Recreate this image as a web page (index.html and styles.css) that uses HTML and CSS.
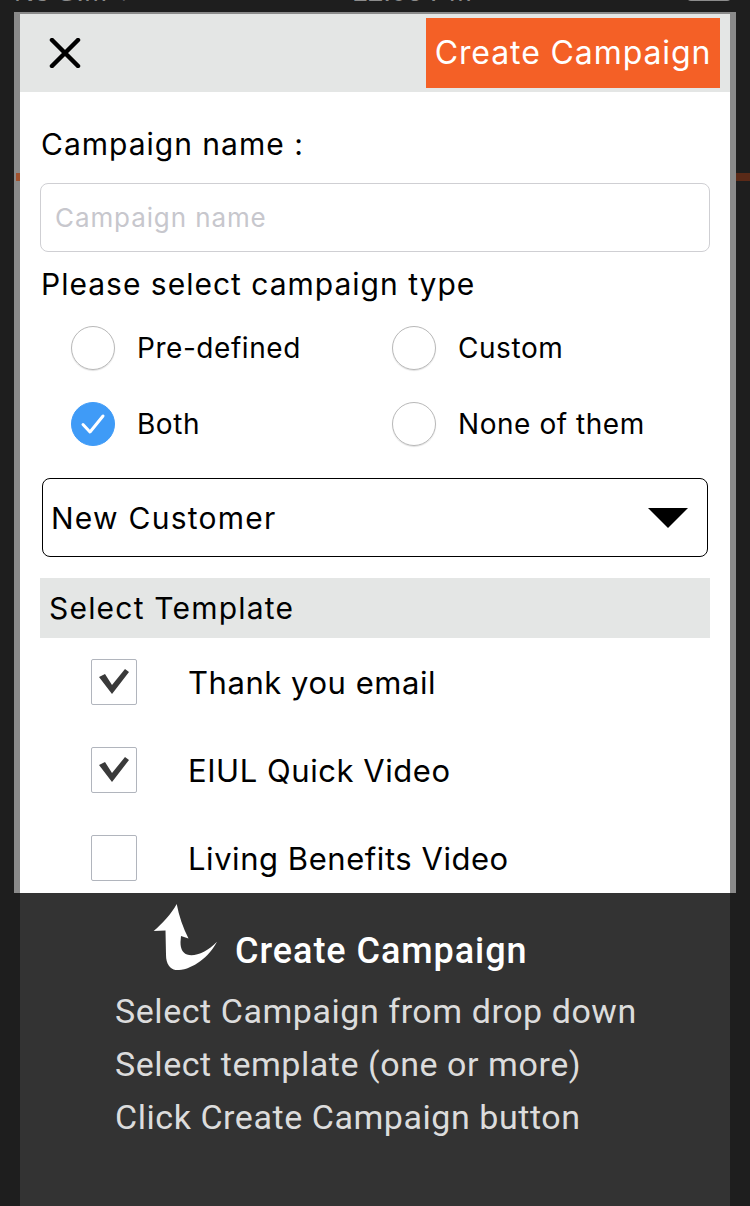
FILE: index.html
```html
<!DOCTYPE html>
<html>
<head>
<meta charset="utf-8">
<link rel="stylesheet" href="styles.css">
</head>
<body>
<div class="statusbar">
  <span class="sb-left">No SIM &#x2708;</span>
  <span class="sb-time">12:06 PM</span>
  <span class="sb-battery"></span>
</div>
<div class="modal">
  <span class="bleed bleed-left"></span>
  <span class="bleed bleed-right"></span>
  <div class="modal-head">
    <svg class="close-icon" width="32" height="30" viewBox="0 0 32 30">
      <path d="M3 2 L29 28 M29 2 L3 28" stroke="#000" stroke-width="4.5" stroke-linecap="round" fill="none"/>
    </svg>
    <div class="create-btn">Create Campaign</div>
  </div>
  <div class="modal-body">
    <div class="label first">Campaign name :</div>
    <div class="input"><span class="placeholder">Campaign name</span></div>
    <div class="label second">Please select campaign type</div>
    <div class="radios">
      <div class="radio"><span class="circle"></span><span class="rlabel">Pre-defined</span></div>
      <div class="radio"><span class="circle"></span><span class="rlabel">Custom</span></div>
      <div class="radio"><span class="circle checked"><svg width="44" height="44" viewBox="0 0 44 44"><path d="M12 22.5 L19 30 L32 14" stroke="#fff" stroke-width="3" fill="none" stroke-linecap="round" stroke-linejoin="round"/></svg></span><span class="rlabel">Both</span></div>
      <div class="radio"><span class="circle"></span><span class="rlabel">None of them</span></div>
    </div>
    <div class="select">
      <span class="select-text">New Customer</span>
      <svg class="caret" width="40" height="20" viewBox="0 0 40 20"><path d="M0 0 H40 L20 20 Z" fill="#000"/></svg>
    </div>
    <div class="section-bar">Select Template</div>
    <div class="templates">
      <div class="trow"><span class="box"><svg width="46" height="46" viewBox="0 0 46 46"><path d="M8 18 L14 15 L21 26 L34 10 L38 13 L21 35 Z" fill="#3a3a3a"/></svg></span><span class="tlabel">Thank you email</span></div>
      <div class="trow"><span class="box"><svg width="46" height="46" viewBox="0 0 46 46"><path d="M8 18 L14 15 L21 26 L34 10 L38 13 L21 35 Z" fill="#3a3a3a"/></svg></span><span class="tlabel">EIUL Quick Video</span></div>
      <div class="trow"><span class="box"></span><span class="tlabel">Living Benefits Video</span></div>
    </div>
  </div>
</div>
<div class="tour">
  <div class="tour-head">
    <svg class="tour-arrow" width="64" height="66" viewBox="22 13 64 66">
      <path d="M45.7 13 C41 22 31 33 22.7 40 L34.5 39.5 L35 64 C35 75 41 80 48 79 C62 78 78 66 86 50.7 C76 61 64 66 56 63.5 C51 61.5 49.5 57 49.5 51 L50 45 L57.5 47.5 C52 37 48 25 45.7 13 Z" fill="#fff"/>
    </svg>
    <div class="tour-title">Create Campaign</div>
  </div>
  <div class="tour-lines">
    <div>Select Campaign from drop down</div>
    <div>Select template (one or more)</div>
    <div>Click Create Campaign button</div>
  </div>
</div>
</body>
</html>
```

FILE: styles.css
```css
html, body {
  margin: 0;
  padding: 0;
  background: #1e1e1e;
  height: 1206px;
  overflow: hidden;
}

.statusbar {
  height: 12px;
  overflow: hidden;
  display: flex;
  justify-content: space-between;
  align-items: flex-start;
  padding: 0 18px 0 14px;
  font-family: "Liberation Sans", Arial, sans-serif;
  font-size: 28px;
  color: #8c8c8c;
}
.statusbar span {
  display: block;
  line-height: 30px;
  margin-top: -23px;
}
.sb-battery {
  width: 46px;
  height: 24px;
  border: 2px solid #8c8c8c;
  border-radius: 5px;
  box-sizing: border-box;
}

.modal {
  position: relative;
  margin: 0 14px;
  border: 6px solid #8a8a8a;
  border-top-width: 2px;
  border-bottom: 0;
  font-family: "Inter", "Liberation Sans", sans-serif;
  color: #000;
}
.bleed {
  position: absolute;
  top: 159px;
  height: 8px;
  background: #a0512e;
}
.bleed-left { left: -4px; width: 4px; }
.bleed-right { right: -20px; width: 14px; background: #5a2a18; }

.modal-head {
  height: 78px;
  background: #e4e6e5;
  display: flex;
  align-items: center;
  justify-content: space-between;
  padding: 0 10px 0 29px;
}
.close-icon { display: block; }
.create-btn {
  width: 294px;
  height: 70px;
  background: #f46026;
  color: #fff;
  font-size: 32px;
  line-height: 70px;
  text-align: center;
  letter-spacing: 0.9px;
}

.modal-body {
  background: #fff;
  height: 801px;
  overflow: hidden;
  padding: 0 20px;
}
.label {
  font-size: 30px;
  line-height: 40px;
  padding-left: 1px;
  letter-spacing: 1px;
}
.label.first { margin-top: 32px; }
.label.second { margin-top: 12px; }

.input {
  margin-top: 19px;
  height: 69px;
  box-sizing: border-box;
  border: 1px solid #cfcfd3;
  border-radius: 8px;
  display: flex;
  align-items: center;
  padding-left: 14px;
}
.placeholder {
  color: #c7c7cd;
  font-size: 26px;
  letter-spacing: 0.9px;
}

.radios {
  margin-top: 14px;
  display: grid;
  grid-template-columns: 321px 1fr;
  row-gap: 16px;
  padding-left: 31px;
}
.radio {
  height: 60px;
  display: flex;
  align-items: center;
}
.circle {
  width: 44px;
  height: 44px;
  box-sizing: border-box;
  border-radius: 50%;
  border: 1px solid #b8b8b8;
  box-shadow: 0 1px 1px rgba(0,0,0,0.12);
  flex-shrink: 0;
}
.circle.checked {
  background: #3f9bf7;
  border-color: #3f9bf7;
  box-shadow: none;
}
.circle svg { display: block; margin: -1px; }
.rlabel {
  margin-left: 22px;
  font-size: 28px;
  letter-spacing: 0.55px;
}

.select {
  margin: 24px 2px 0;
  height: 79px;
  box-sizing: border-box;
  border: 1.5px solid #000;
  border-radius: 8px;
  display: flex;
  align-items: center;
  justify-content: space-between;
  padding: 0 19px 0 8px;
}
.select-text { font-size: 30px; letter-spacing: 1.25px; }
.caret { display: block; }

.section-bar {
  margin-top: 21px;
  height: 60px;
  background: #e4e6e5;
  display: flex;
  align-items: center;
  padding-left: 9px;
  font-size: 30px;
  letter-spacing: 1.2px;
}

.trow {
  height: 88px;
  display: flex;
  align-items: center;
  padding-left: 51px;
}
.box {
  width: 46px;
  height: 46px;
  box-sizing: border-box;
  border: 1px solid #b1b5bd;
  border-radius: 2px;
  flex-shrink: 0;
}
.box svg { display: block; margin: -1px; }
.tlabel {
  margin-left: 51px;
  font-size: 31px;
  letter-spacing: 0.55px;
}

.tour {
  margin: 0 20px;
  height: 313px;
  background: #333333;
  font-family: "Roboto", "Liberation Sans", sans-serif;
}
.tour-head {
  display: flex;
  align-items: flex-start;
  padding: 11px 0 0 133px;
}
.tour-arrow { display: block; }
.tour-title {
  margin: 27px 0 0 18px;
  color: #fff;
  font-size: 36px;
  font-weight: 500;
  line-height: 40px;
  letter-spacing: 0.95px;
}
.tour-lines {
  margin-top: 14px;
  padding-left: 95px;
  color: #dcdcdc;
  font-size: 34px;
  line-height: 53px;
  letter-spacing: 0.55px;
}
```
